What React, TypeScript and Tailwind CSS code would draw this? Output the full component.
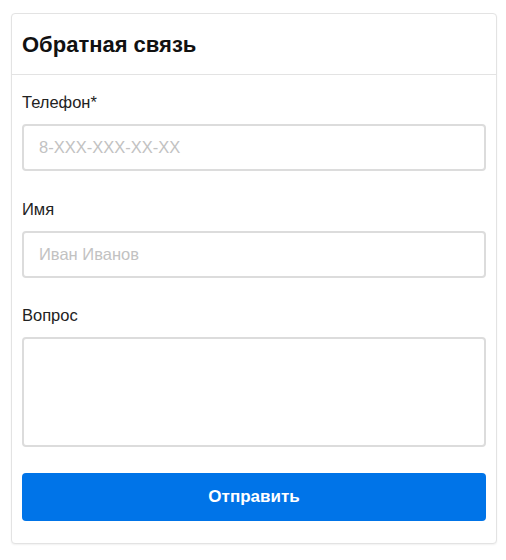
export default function App() {
  return (
    <div className="min-h-[560px] bg-white pl-[11px] pr-[9px] pt-[13px] font-['Liberation_Sans',Arial,sans-serif]">
      <div className="w-[486px] rounded-[4px] border border-[#e3e3e3] bg-white shadow-[0_1px_2px_rgba(0,0,0,0.06)]">
        {/* Header */}
        <div className="flex h-[61px] items-center border-b border-[#e3e3e3] px-[10px]">
          <h2 className="text-[22px] font-bold text-[#111]">Обратная связь</h2>
        </div>

        {/* Form */}
        <form className="px-[10px] pb-[22px] pt-[15px]">
          <label className="block text-[16.5px] leading-[24px] text-[#222]">Телефон*</label>
          <input
            className="mt-[10px] block h-[47px] w-full rounded-[4px] border-2 border-[#dcdcdc] px-[15px] text-[16.5px] text-[#222] outline-none placeholder:text-[#c2c2c2]"
            placeholder="8-XXX-XXX-XX-XX"
          />

          <label className="mt-[26px] block text-[16.5px] leading-[24px] text-[#222]">Имя</label>
          <input
            className="mt-[10px] block h-[47px] w-full rounded-[4px] border-2 border-[#dcdcdc] px-[15px] text-[16.5px] text-[#222] outline-none placeholder:text-[#c2c2c2]"
            placeholder="Иван Иванов"
          />

          <label className="mt-[25px] block text-[16.5px] leading-[24px] text-[#222]">Вопрос</label>
          <textarea className="mt-[10px] block h-[110px] w-full resize-none rounded-[4px] border-2 border-[#dcdcdc] px-[15px] py-[10px] text-[16px] outline-none" />

          <button
            type="button"
            className="mt-[26px] flex h-[48px] w-full items-center justify-center rounded-[4px] bg-[#0074e8] text-[17px] font-bold text-white"
          >
            Отправить
          </button>
        </form>
      </div>
    </div>
  )
}
